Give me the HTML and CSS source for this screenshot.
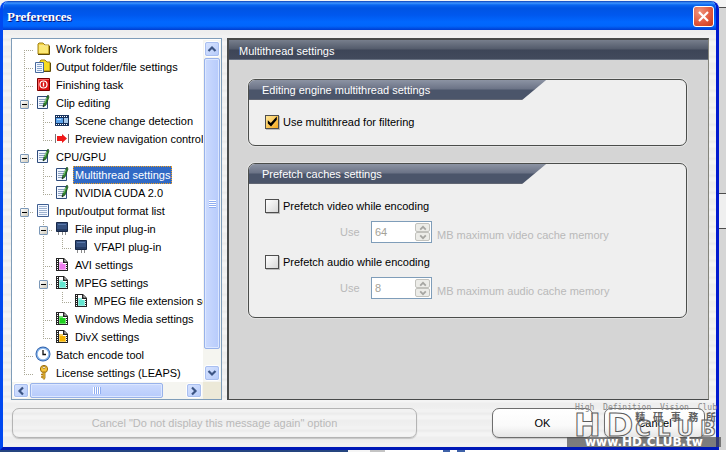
FILE: index.html
```
<!DOCTYPE html>
<html lang="en">
<head>
<meta charset="utf-8">
<title>Preferences</title>
<link rel="stylesheet" href="styles.css">
</head>
<body>
<svg class="sprites" aria-hidden="true">
  <symbol id="folder" viewBox="0 0 16 16"><path d="M3 14V4l1-1h4l2 2h4v9z" fill="#f5d442" stroke="#a08218"/><path d="M4 7h9v6H4z" fill="#fbe874"/><path d="M4 6h9" stroke="#fff8c0"/><path d="M14.500 6v8.500H3" stroke="#5e4a08" fill="none"/></symbol>
  <symbol id="output" viewBox="0 0 16 16"><path d="M5 13V3l1-1h4l2 2h3v9z" fill="#f8dc20" stroke="#a08218"/><path d="M6 5h3v7H6z" fill="#fff27a"/><path d="M15.500 5v8.500H6" stroke="#5e4a08" fill="none"/><path d="M.5 4.500h8v10h-8z" fill="#f2f7ff" stroke="#46689c"/><path d="M2 6.500h5M2 8.500h5M2 10.500h5M2 12.500h5" stroke="#8ba6cc"/></symbol>
  <symbol id="finish" viewBox="0 0 16 16"><path d="M2.500 2.500h12v12h-12z" fill="#d81010" stroke="#7a0000"/><path d="M3 3.500h11M3.500 3v11" stroke="#ff6060"/><circle cx="8.500" cy="8.500" r="3.500" fill="none" stroke="#fff" stroke-width="1.200"/><path d="M8.500 6.500v4" stroke="#fff" stroke-width="1.400"/></symbol>
  <symbol id="edit" viewBox="0 0 16 16"><path d="M2.500 2.500h10v12h-10z" fill="#f2f7ff" stroke="#2f4c7c"/><path d="M4 5.500h6M4 7.500h6M4 9.500h5M4 11.500h4" stroke="#8ba0c0"/><path d="M13 1l-4 8-1 4 3-2 3-8z" fill="#2e8a2e" stroke="#173f18" stroke-width=".7"/><path d="M11.500 4l-2 5" stroke="#8ad08a"/><path d="M8 13l.5-2 1 .8z" fill="#111"/></symbol>
  <symbol id="film" viewBox="0 0 16 16"><path d="M1 3h14v11H1z" fill="#17335e"/><path d="M2 4.500h12M2 12.500h12" stroke="#fff" stroke-dasharray="1 1"/><path d="M2 6h7v5H2z" fill="#5aa2ea"/><path d="M3 7h4v1H3z" fill="#b8dcff"/><path d="M10 6h4v5h-4z" fill="#a5c8ea"/></symbol>
  <symbol id="preview" viewBox="0 0 16 16"><path d="M1.500 4v9M14.500 4v9" stroke="#777"/><path d="M3 6h5V4l5 4.500L8 13v-2H3z" fill="#f01818"/></symbol>
  <symbol id="list" viewBox="0 0 16 16"><path d="M2.500 2.500h11v12h-11z" fill="#f4f8ff" stroke="#3f5f92"/><path d="M4 4.500h8M4 6.500h8M4 8.500h8M4 10.500h8M4 12.500h8" stroke="#9db2d0"/></symbol>
  <symbol id="plug" viewBox="0 0 16 16"><path d="M4.500 11v4M8.500 11v4M11.500 11v4" stroke="#8b8b8b"/><path d="M2.500 2.500h11v9h-11z" fill="#35507e" stroke="#172849"/><path d="M4 4h8v1H4z" fill="#5978aa"/><path d="M3 9h10v2H3z" fill="#263c63"/></symbol>
  <symbol id="media" viewBox="0 0 16 16"><path d="M2 2h8l4 4v9H2z" fill="#242424"/><path d="M3.500 3v11M12.500 7v7" stroke="#fff" stroke-dasharray="1 1"/><path d="M5 3h4v4h3v7H5z" fill="#fff"/><path d="M6 8h5v5H6z" fill="currentColor"/><path d="M5 6h4v2h3v6H5z" fill="currentColor" opacity=".65"/><path d="M10 3v3h3" fill="#fff" stroke="#242424"/></symbol>
  <symbol id="clock" viewBox="0 0 16 16"><circle cx="8" cy="8" r="7.500" fill="#2e61ac"/><circle cx="8" cy="8" r="6.600" fill="#88b4e8"/><circle cx="8" cy="8" r="5.300" fill="#fff"/><path d="M8 4v4.500h3" fill="none" stroke="#111" stroke-width="1.300"/></symbol>
  <symbol id="key" viewBox="0 0 16 16"><circle cx="9" cy="5" r="3.600" fill="#f6c63c" stroke="#9a6b0c"/><circle cx="9" cy="3.500" r="1.200" fill="#fff" stroke="#9a6b0c" stroke-width=".7"/><path d="M8 8h2v6l-1 1.500L8 14.500z" fill="#f6c63c" stroke="#9a6b0c" stroke-width=".8"/><path d="M8 10.500H6M8 13H6" stroke="#b37d12" stroke-width="1.500"/></symbol>
  <symbol id="chev" viewBox="0 0 10 10"><path d="M1.500 7L5 3.500 8.500 7" fill="none" stroke="currentColor" stroke-width="2.200"/></symbol>
</svg>

<div class="desk">
<main class="window">
  <header class="titlebar">
    <h1>Preferences</h1>
    <button class="close" aria-label="Close"><svg viewBox="0 0 19 19"><path d="M5 5l9 9M14 5l-9 9" stroke="#fff" stroke-width="2.200"/></svg></button>
  </header>

  <div class="content">
    <nav class="tree" aria-label="Settings sections">
      <ul class="nodes">
        <li><i class="c first"></i><svg class="ico"><use href="#folder"/></svg><span>Work folders</span></li>
        <li><i class="c tee"></i><svg class="ico"><use href="#output"/></svg><span>Output folder/file settings</span></li>
        <li><i class="c tee"></i><svg class="ico"><use href="#finish"/></svg><span>Finishing task</span></li>
        <li><i class="c tee"><button class="toggle" aria-label="Collapse Clip editing"></button></i><svg class="ico"><use href="#edit"/></svg><span>Clip editing</span></li>
        <li><i class="c pass"></i><i class="c tee"></i><svg class="ico"><use href="#film"/></svg><span>Scene change detection</span></li>
        <li><i class="c pass"></i><i class="c end"></i><svg class="ico"><use href="#preview"/></svg><span>Preview navigation control</span></li>
        <li><i class="c tee"><button class="toggle" aria-label="Collapse CPU/GPU"></button></i><svg class="ico"><use href="#edit"/></svg><span>CPU/GPU</span></li>
        <li><i class="c pass"></i><i class="c tee"></i><svg class="ico"><use href="#edit"/></svg><span class="selected">Multithread settings</span></li>
        <li><i class="c pass"></i><i class="c end"></i><svg class="ico"><use href="#edit"/></svg><span>NVIDIA CUDA 2.0</span></li>
        <li><i class="c tee"><button class="toggle" aria-label="Collapse Input/output format list"></button></i><svg class="ico"><use href="#list"/></svg><span>Input/output format list</span></li>
        <li><i class="c pass"></i><i class="c tee"><button class="toggle" aria-label="Collapse File input plug-in"></button></i><svg class="ico"><use href="#plug"/></svg><span>File input plug-in</span></li>
        <li><i class="c pass"></i><i class="c pass"></i><i class="c end"></i><svg class="ico"><use href="#plug"/></svg><span>VFAPI plug-in</span></li>
        <li><i class="c pass"></i><i class="c tee"></i><svg class="ico pink"><use href="#media"/></svg><span>AVI settings</span></li>
        <li><i class="c pass"></i><i class="c tee"><button class="toggle" aria-label="Collapse MPEG settings"></button></i><svg class="ico aqua"><use href="#media"/></svg><span>MPEG settings</span></li>
        <li><i class="c pass"></i><i class="c pass"></i><i class="c end"></i><svg class="ico aqua"><use href="#media"/></svg><span>MPEG file extension settings</span></li>
        <li><i class="c pass"></i><i class="c tee"></i><svg class="ico green"><use href="#media"/></svg><span>Windows Media settings</span></li>
        <li><i class="c pass"></i><i class="c end"></i><svg class="ico amber"><use href="#media"/></svg><span>DivX settings</span></li>
        <li><i class="c tee"></i><svg class="ico"><use href="#clock"/></svg><span>Batch encode tool</span></li>
        <li><i class="c end"></i><svg class="ico"><use href="#key"/></svg><span>License settings (LEAPS)</span></li>
      </ul>
      <div class="bar vertical">
        <button aria-label="Scroll up"><svg><use href="#chev"/></svg></button>
        <div class="thumb"></div>
        <button class="down" aria-label="Scroll down"><svg><use href="#chev"/></svg></button>
      </div>
      <div class="bar horizontal">
        <button class="left" aria-label="Scroll left"><svg><use href="#chev"/></svg></button>
        <div class="thumb"></div>
        <button class="right" aria-label="Scroll right"><svg><use href="#chev"/></svg></button>
      </div>
      <div class="corner"></div>
    </nav>

    <section class="panel">
      <h2>Multithread settings</h2>
      <div class="groups">
        <section class="group">
          <h3>Editing engine multithread settings</h3>
          <div class="fields single">
            <label class="check"><input type="checkbox" checked>Use multithread for filtering</label>
          </div>
        </section>
        <section class="group">
          <h3>Prefetch caches settings</h3>
          <div class="fields">
            <label class="check"><input type="checkbox">Prefetch video while encoding</label>
            <div class="amount">
              <label for="video">Use</label>
              <div class="spin"><input id="video" type="number" value="64" disabled><div class="steps"><button disabled aria-label="Increase"><svg><use href="#chev"/></svg></button><button class="down" disabled aria-label="Decrease"><svg><use href="#chev"/></svg></button></div></div>
              <span class="unit">MB maximum video cache memory</span>
            </div>
            <label class="check"><input type="checkbox">Prefetch audio while encoding</label>
            <div class="amount">
              <label for="audio">Use</label>
              <div class="spin"><input id="audio" type="number" value="8" disabled><div class="steps"><button disabled aria-label="Increase"><svg><use href="#chev"/></svg></button><button class="down" disabled aria-label="Decrease"><svg><use href="#chev"/></svg></button></div></div>
              <span class="unit">MB maximum audio cache memory</span>
            </div>
          </div>
        </section>
      </div>
    </section>
  </div>

  <footer class="actions">
    <button class="btn wide" disabled>Cancel "Do not display this message again" option</button>
    <button class="btn ok">OK</button>
    <button class="btn">Cancel</button>
  </footer>
</main>
<div class="behind"><i></i></div>
<div class="under"></div>

<div class="mark">
  <div class="tagline"><span>High</span><span>Definition</span><span>Vision</span><span>Club</span></div>
  <div class="logo">
    <div class="hd"><span>H</span><span>D</span></div>
    <div class="club">
      <div class="han"><span>精</span><span>研</span><span>事</span><span>務</span><span>所</span></div>
      <div class="word"><span>C</span><span>L</span><span>U</span><span>B</span></div>
    </div>
  </div>
  <div class="site">www.HD.CLUB.tw</div>
</div>
</div>
</body>
</html>
```
FILE: styles.css
```
* { box-sizing: border-box; }
body {
  margin: 0;
  background: #f4f4f4;
  color: #000;
  font: 11px/18px "Liberation Sans", Arial, sans-serif;
}
h1, h2, h3, ul { margin: 0; padding: 0; font-weight: normal; font-size: 11px; }
button, input { font: inherit; margin: 0; padding: 0; }
.sprites { position: absolute; width: 0; height: 0; }

.desk {
  position: relative;
  display: grid;
  grid-template-columns: minmax(0, 1fr) 7px;
  padding-top: 1px;
}

/* window frame */
.window {
  border: 3px solid #0831d9;
  border-color: #0046e8 #0019cf #0019b8 #0048f0;
  border-top: 0;
  border-radius: 8px 8px 0 0;
  overflow: hidden;
  background: repeating-linear-gradient(#f2f2f2 0 3px, #ececec 4px 5px, #f4f4f4 7px 10px, #eeeeee 11px 13px, #f0f0f0 17px);
}
.titlebar {
  display: flex;
  align-items: center;
  justify-content: space-between;
  height: 29px;
  margin: 0 -3px;
  padding: 2px 5px 0 7px;
  background: linear-gradient(#0a3fb8, #3d95ff 2px, #0a66f0 4px, #0054e3 7px, #0058ee 14px, #0168ff 21px, #0166fc 25px, #003dd0);
}
.titlebar h1 {
  color: #fff;
  font: bold 13px/18px "Liberation Serif", serif;
  text-shadow: 1px 1px #0a1883;
}
.close {
  width: 21px;
  height: 21px;
  border: 1px solid #fff;
  border-radius: 3px;
  background: radial-gradient(circle at 30% 25%, #f0947c, #e0553a 60%, #c53a16);
}
.close svg { display: block; width: 19px; height: 19px; }
.content {
  display: grid;
  grid-template-columns: 211px minmax(0, 1fr);
  gap: 5px;
  padding: 8px 7px 8px 8px;
}

/* tree */
.tree {
  display: grid;
  grid-template-columns: minmax(0, 1fr) 18px;
  grid-template-rows: auto 17px;
  padding-top: 1px;
  border: 1px solid #7f9db9;
  background: #fff;
}
.nodes { list-style: none; padding-left: 3px; overflow: hidden; }
.nodes li { display: flex; height: 18px; white-space: nowrap; }
.nodes span { margin-left: 1px; padding: 0 2px; }
.nodes .selected {
  background: #316ac5;
  color: #fff;
  outline: 1px dotted #f0a020;
  outline-offset: -1px;
}
.ico { flex: none; width: 16px; height: 16px; margin: 0 2px 0 1px; }
.pink { color: #ee7cf0; }
.aqua { color: #62e6d0; }
.green { color: #1fd01f; }
.amber { color: #f5b400; }
.c {
  --v: repeating-linear-gradient(#aaa896 0 1px, transparent 1px 2px);
  --h: repeating-linear-gradient(90deg, #aaa896 0 1px, transparent 1px 2px);
  flex: none;
  display: flex;
  align-items: center;
  justify-content: center;
  width: 19px;
  background-repeat: no-repeat;
}
.pass { background-image: var(--v); background-size: 1px 18px; background-position: 9px 0; }
.tee { background-image: var(--v), var(--h); background-size: 1px 18px, 10px 1px; background-position: 9px 0, 9px 10px; }
.end { background-image: var(--v), var(--h); background-size: 1px 10px, 10px 1px; background-position: 9px 0, 9px 10px; }
.first { background-image: var(--v), var(--h); background-size: 1px 8px, 10px 1px; background-position: 9px 10px, 9px 10px; }
.toggle {
  width: 9px;
  height: 9px;
  margin-top: 2px;
  border: 1px solid #7b98b8;
  border-radius: 1px;
  background: linear-gradient(#000, #000) center / 5px 1px no-repeat, linear-gradient(135deg, #fff, #cfcabb);
}

/* scroll bars */
.bar { display: flex; padding: 1px; gap: 1px; background: #f5f5f0; }
.vertical { flex-direction: column; }
.bar button {
  display: grid;
  place-items: center;
  flex: 0 0 16px;
  border: 1px solid #fff;
  outline: 1px solid #a9bff0;
  outline-offset: -2px;
  border-radius: 3px;
  background: linear-gradient(135deg, #d8e4ff, #b6cbfa);
  color: #3c5584;
}
.bar svg { width: 10px; height: 10px; }
.down svg { transform: rotate(180deg); }
.left svg { transform: rotate(-90deg); }
.right svg { transform: rotate(90deg); }
.thumb { border: 1px solid #98b2ea; border-radius: 2px; box-shadow: inset 0 0 0 1px #dce7ff; }
.vertical .thumb {
  flex: 0 1 291px;
  background: repeating-linear-gradient(#fff 0 1px, #8fadf0 1px 2px) center / 7px 8px no-repeat, linear-gradient(90deg, #cbdafe, #b7cbfb);
}
.horizontal .thumb {
  flex: 0 1 133px;
  background: repeating-linear-gradient(90deg, #fff 0 1px, #8fadf0 1px 2px) center / 8px 7px no-repeat, linear-gradient(#cbdafe, #b7cbfb);
}
.bar .down { margin: auto 0 0; }
.bar .right { margin: 0 0 0 auto; }
.corner { background: #ece9d8; }

/* settings panel */
.panel {
  border: 2px solid #484a4a;
  border-width: 2px 1px 1px 2px;
  border-right-color: #85857c;
  background: #d5d5d5;
}
.panel h2 {
  height: 20px;
  padding: 2px 10px 0;
  background: linear-gradient(#777e8c, #535b6b 9px, #3d4557 10px, #424a5c 19px, #8b95a3);
  color: #fff;
}
.groups { display: grid; gap: 17px; padding: 19px 21px 0 19px; }
.group {
  border: 1px solid #4b4d4b;
  border-radius: 7px;
  background: #efefef;
  box-shadow: 0 0 0 1px #e2e2e2;
  overflow: hidden;
}
.group h3 {
  width: 68%;
  height: 20px;
  padding: 1px 13px 0;
  background: linear-gradient(#8c93a3, #6b7386 9px, #4b556a 10px, #4b556a 19px, #77777c);
  clip-path: polygon(0 0, 100% 0, calc(100% - 24px) 100%, 0 100%);
  color: #fff;
}
.fields { padding: 13px 16px 8px; }
.single { padding-bottom: 14px; }
.check { display: flex; align-items: center; gap: 4px; width: max-content; height: 18px; }
.check input {
  appearance: none;
  display: grid;
  width: 14px;
  height: 14px;
  border: 1px solid #4e4e4e;
  background: linear-gradient(135deg, #fff, #d8d8d8);
  box-shadow: 1px 1px #bbb;
}
.check input:checked { background: linear-gradient(135deg, #ffe89a, #f5a81c); }
.check input:checked::before {
  content: "";
  background: #000;
  clip-path: polygon(15% 35%, 40% 58%, 90% 5%, 90% 32%, 42% 88%, 15% 62%);
}
.amount { display: flex; align-items: center; height: 38px; padding: 0 0 4px 75px; color: #b9b9b9; }
.amount label { width: 31px; }
.spin {
  display: flex;
  width: 61px;
  height: 22px;
  border: 1px solid #7f9db9;
  background: #fff;
}
.spin input {
  appearance: textfield;
  flex: 1;
  min-width: 0;
  padding-left: 3px;
  border: 0;
  background: none;
  color: #a5a297;
}
.spin input::-webkit-inner-spin-button { appearance: none; margin: 0; }
.steps { display: grid; width: 16px; padding: 1px 1px 1px 0; }
.steps button {
  display: grid;
  place-items: center;
  min-height: 0;
  border: 1px solid #c2c2bd;
  border-radius: 2px;
  background: #ecece8;
  color: #a6a6a2;
}
.steps svg { width: 10px; height: 8px; }
.unit { padding: 5px 0 0 5px; }

/* bottom buttons */
.actions { display: flex; gap: 11px; padding: 0 11px 9px 9px; }
.btn {
  flex: 0 0 101px;
  height: 30px;
  border: 1px solid #6e6e6e;
  border-radius: 7px;
  background: linear-gradient(#fff, #fafafa 60%, #e6e6e6);
  box-shadow: 0 1px 1px #c4c4c4;
  color: #000;
}
.wide { flex: 0 1 405px; border-color: #b4b4b4; background: none; color: #b9b9b9; }
.ok { margin-left: auto; }

/* slivers of the windows beneath */
.behind {
  display: grid;
  grid-template-rows: 185px 36px;
  margin-top: 6px;
  border-top: 1px solid #4c4c4c;
  background: #d5d5d5;
}
.behind i { grid-row: 2; border: solid #4c4c4c; border-width: 1px 0; background: #efefef; }
.under {
  grid-column: 1 / -1;
  height: 2px;
  background: linear-gradient(90deg, #25457f 48%, #f5f5f5 48% 51%, #c4c4c4 51% 53%, #fff 53% 61%, #3f62a8 61% 62%, #fff 62% 63%, #3f62a8 63% 64%, #fff 64%);
}

/* watermark laid over the window corner */
.mark {
  position: absolute;
  right: 5px;
  bottom: 5px;
  width: 154px;
  color: #fff;
  pointer-events: none;
}
.tagline {
  display: flex;
  justify-content: space-between;
  padding: 0 4px 0 8px;
  color: #8a8a8a;
  font: 8px/8px "DejaVu Sans Mono", monospace;
}
.logo { display: flex; gap: 2px; height: 25px; padding: 0 5px 0 7px; }
.hd, .word { color: rgba(250, 250, 250, .4); -webkit-text-stroke: 1px #5c5c5c; }
.hd { display: flex; gap: 6px; font: bold 32px/26px "DejaVu Sans", sans-serif; }
.club { flex: 1; min-width: 0; }
.han { display: flex; justify-content: space-between; color: #606060; font: bold 10px/10px "Noto Sans CJK TC", sans-serif; }
.word { display: flex; justify-content: space-between; font: bold 21px/15px "DejaVu Sans", sans-serif; }
.site {
  background: rgba(75, 75, 75, .7);
  text-align: center;
  font: bold 12px/10px "DejaVu Sans", sans-serif;
}
```
